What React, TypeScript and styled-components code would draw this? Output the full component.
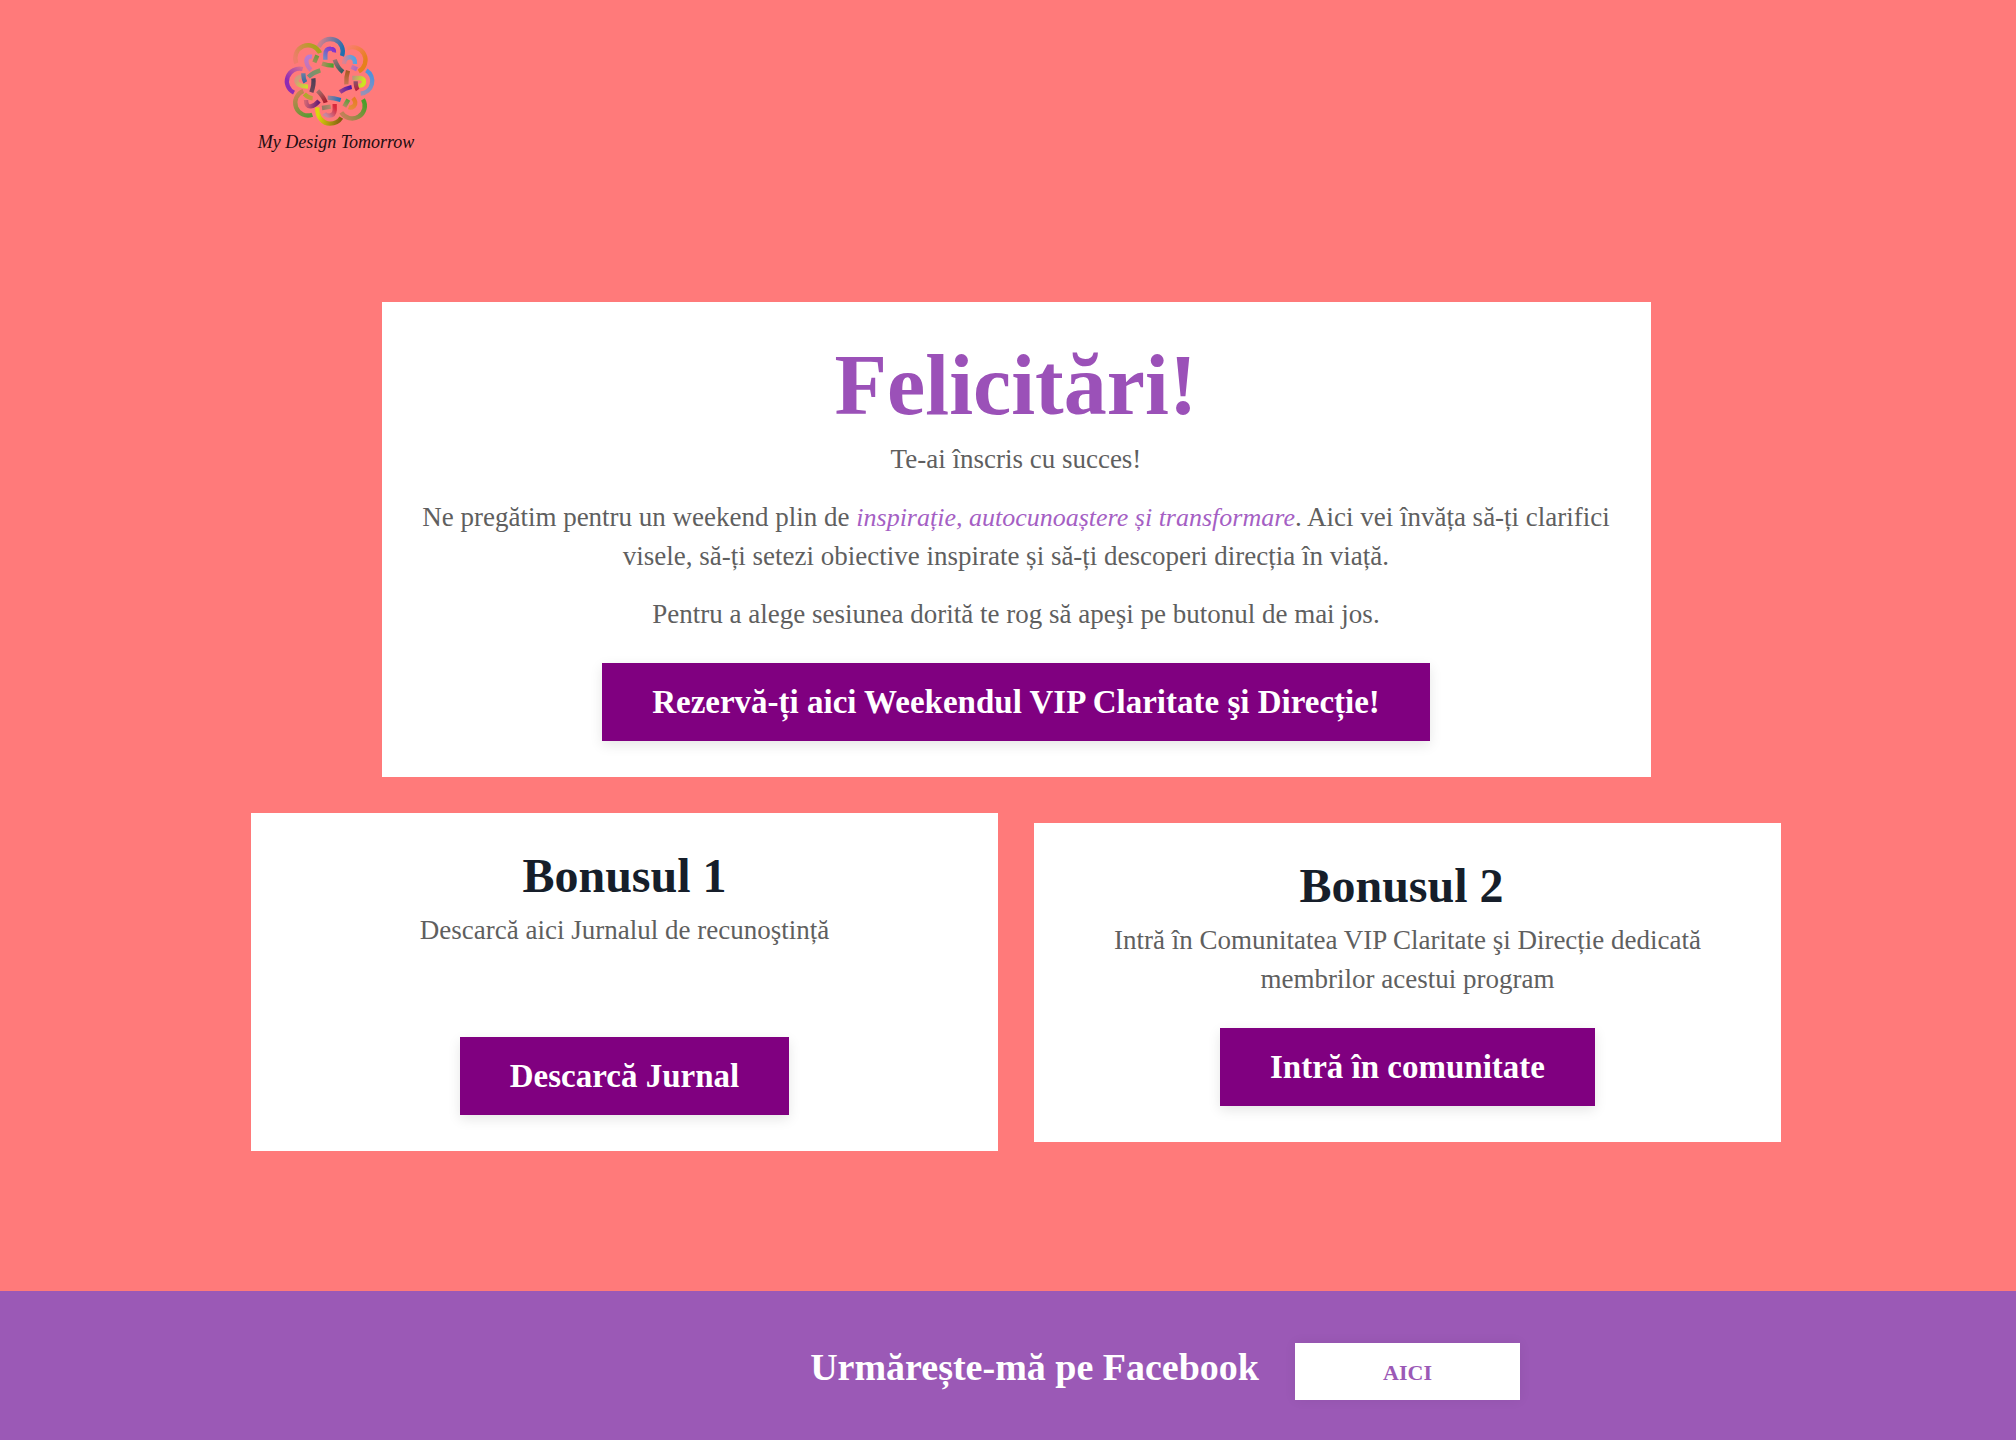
import React from "react";
import styled, { createGlobalStyle } from "styled-components";

const GlobalStyle = createGlobalStyle`
  *, *::before, *::after { box-sizing: border-box; }
  body {
    margin: 0;
    background: #ff7a7a;
    color: #5f5f5f;
    font-family: "Liberation Serif", "Times New Roman", serif;
    font-size: 27px;
    line-height: 39px;
  }
`;

const Container = styled.div`
  max-width: 1530px;
  margin: 0 auto;
`;

const Grid = styled.div`
  display: grid;
  grid-template-columns: repeat(12, minmax(0, 1fr));
  gap: 36px;
`;

const Header = styled.header`
  padding: 30px 0 132px 16px;
`;

const LogoLink = styled.a`
  display: block;
  width: 180px;
  height: 140px;
`;

const Main = styled.main`
  padding: 0 0 140px 16px;
`;

const Cards = styled(Grid)`
  align-items: center;
`;

const Card = styled.section<{ $column: string }>`
  grid-column: ${(p) => p.$column};
  padding: 36px;
  background: #fff;
  text-align: center;
`;

const Title = styled.h1`
  margin: 0 0 8px;
  color: #9b51b8;
  font-size: 86px;
  line-height: 94px;
`;

const Subtitle = styled.h2`
  margin: 0 0 8px;
  color: #161e2a;
  font-size: 48px;
  line-height: 54px;
`;

const Text = styled.p`
  margin: 0 0 19px;
`;

const Accent = styled.em`
  color: #a55fc4;
  font-size: 26px;
`;

const Action = styled.div<{ $roomy?: boolean }>`
  padding-top: ${(p) => (p.$roomy ? 68 : 10)}px;
`;

const Button = styled.a`
  display: inline-block;
  padding: 20px 50px 19px;
  background: #800080;
  box-shadow: 0 4px 12px rgba(0, 0, 0, 0.1);
  color: #fff;
  font-size: 33px;
  font-weight: 700;
  text-decoration: none;
  vertical-align: top;
`;

const Footer = styled.footer`
  padding: 52px 0 40px 16px;
  background: #9b59b6;
`;

const FooterGrid = styled(Grid)`
  align-items: baseline;
`;

const FooterTitle = styled.h2`
  grid-column: 1 / 9;
  margin: 0;
  color: #fff;
  font-size: 38px;
  line-height: 48px;
  text-align: right;
`;

const FooterButton = styled.a`
  grid-column: 9 / 11;
  padding: 10px 9px 8px;
  background: #fff;
  box-shadow: 0 0 12px rgba(0, 0, 0, 0.06);
  color: #9b59b6;
  font-size: 22px;
  font-weight: 700;
  text-align: center;
  text-decoration: none;
`;

const Wordmark = styled.text`
  fill: #1c0c10;
  font-size: 54px;
  font-style: italic;
`;

type Stroke = {
  d: string;
  colors: [string, string];
  line: [number, number, number, number];
};

const strokes: Stroke[] = [
  // Outer loops
  { d: "M236 81A37 37 0 0 1 306 108", colors: ["#d0808c", "#1f6fb0"], line: [236, 78, 306, 100] },
  { d: "M320 86A37 37 0 0 1 356 154", colors: ["#fb7e70", "#e6801c"], line: [318, 86, 366, 130] },
  { d: "M379 151A38 38 0 0 1 362 221", colors: ["#4f92dc", "#9c91b4"], line: [390, 160, 362, 221] },
  { d: "M369 238A37 37 0 0 1 304 277", colors: ["#4a9f2a", "#c28058"], line: [369, 240, 308, 284] },
  { d: "M232 262C230 292 250 311 270 311C285 311 297 304 304 293", colors: ["#dcd50c", "#85600f"], line: [236, 280, 304, 294] },
  { d: "M190 213A37 37 0 0 0 217 284", colors: ["#c58550", "#549c32"], line: [175, 220, 217, 284] },
  { d: "M188 147A38 38 0 0 0 162 218", colors: ["#d06c96", "#8e2bb4"], line: [190, 147, 155, 190] },
  { d: "M169 130A37 37 0 0 1 240 99", colors: ["#f07c6c", "#a8a51a"], line: [169, 125, 235, 90] },
  // Hooks inside each loop
  { d: "M256 119V104Q256 85 272 86Q284 86 282 97", colors: ["#7187c4", "#882dcb"], line: [256, 116, 283, 88] },
  { d: "M312 132Q312 112 331 111Q346 113 345 132", colors: ["#df8291", "#55a2e2"], line: [312, 132, 345, 122] },
  { d: "M334 140L351 148", colors: ["#c777aa", "#aa68c4"], line: [334, 140, 351, 148] },
  { d: "M337 174H360Q373 176 372 187Q370 198 355 197", colors: ["#b8967e", "#cde321"], line: [337, 174, 370, 185] },
  { d: "M347 184Q347 202 353 210", colors: ["#87536b", "#b81e38"], line: [347, 184, 353, 210] },
  { d: "M339 234Q351 248 342 258Q334 265 326 262", colors: ["#e77b24", "#e68b3a"], line: [342, 234, 328, 262] },
  { d: "M325 239L313 260", colors: ["#53a236", "#b08b63"], line: [325, 239, 313, 260] },
  { d: "M284 252V270Q283 286 268 287Q257 286 253 280", colors: ["#d9283a", "#c688a0"], line: [284, 260, 256, 283] },
  { d: "M246 264L272 260", colors: ["#947663", "#b08b6b"], line: [246, 264, 272, 260] },
  { d: "M198 240Q198 260 212 259Q225 257 237 243", colors: ["#d46674", "#651c73"], line: [195, 244, 237, 248] },
  { d: "M193 222Q205 234 218 235", colors: ["#acad29", "#c59442"], line: [193, 222, 218, 235] },
  { d: "M183 170Q166 173 170 187Q176 199 204 200", colors: ["#d09c7d", "#cde124"], line: [174, 176, 204, 200] },
  { d: "M190 160Q190 178 196 187", colors: ["#697fa3", "#3b689d"], line: [190, 160, 196, 187] },
  { d: "M216 110Q201 108 199 121Q199 138 213 150", colors: ["#b77cd4", "#cc72ad"], line: [207, 108, 207, 150] },
  { d: "M232 106L223 127", colors: ["#6b9c38", "#9b8f5a"], line: [232, 106, 223, 127] },
  // Inner ring
  { d: "M246 131Q263 137 281 137", colors: ["#b58b61", "#3fa62a"], line: [246, 131, 281, 137] },
  { d: "M284 119Q292 143 309 156", colors: ["#9c7273", "#305b62"], line: [284, 119, 309, 156] },
  { d: "M324 152Q318 170 319 193", colors: ["#a55922", "#c87452"], line: [324, 152, 319, 193] },
  { d: "M300 216Q315 205 335 201", colors: ["#9f3f8d", "#4817a8"], line: [300, 216, 335, 201] },
  { d: "M263 233Q282 234 302 240", colors: ["#a18091", "#1e70bd"], line: [263, 233, 302, 240] },
  { d: "M233 212Q251 230 257 248", colors: ["#a1746c", "#a8182b"], line: [233, 212, 257, 248] },
  { d: "M220 175Q223 192 214 217", colors: ["#493c55", "#704757"], line: [220, 175, 214, 217] },
  { d: "M205 171Q220 157 241 151", colors: ["#788b7d", "#84965a"], line: [205, 171, 241, 151] },
];

function Logo() {
  return (
    <svg width="180" height="140" viewBox="33 30 540 420" role="img" aria-label="My Design Tomorrow">
      <defs>
        {strokes.map(({ colors, line }, i) => (
          <linearGradient
            key={i}
            id={`strand-${i}`}
            gradientUnits="userSpaceOnUse"
            x1={line[0]}
            y1={line[1]}
            x2={line[2]}
            y2={line[3]}
          >
            <stop offset="0" stopColor={colors[0]} />
            <stop offset="1" stopColor={colors[1]} />
          </linearGradient>
        ))}
      </defs>
      <g fill="none" strokeWidth="13">
        {strokes.map(({ d }, i) => (
          <path key={i} d={d} stroke={`url(#strand-${i})`} />
        ))}
      </g>
      <Wordmark x="288" y="385" textAnchor="middle">
        My Design Tomorrow
      </Wordmark>
    </svg>
  );
}

export default function App() {
  return (
    <>
      <GlobalStyle />
      <Header>
        <Container>
          <LogoLink href="#">
            <Logo />
          </LogoLink>
        </Container>
      </Header>
      <Main>
        <Container>
          <Cards>
            <Card $column="2 / 12">
              <Title>Felicitări!</Title>
              <Text>Te-ai înscris cu succes!</Text>
              <Text>
                Ne pregătim pentru un weekend plin de{" "}
                <Accent>inspirație, autocunoaștere și transformare</Accent>. Aici vei învăța să-ți
                clarifici visele, să-ți setezi obiective inspirate și să-ți descoperi direcția în
                viață.&nbsp;&nbsp;&nbsp;
              </Text>
              <Text>Pentru a alege sesiunea dorită te rog să apeşi pe butonul de mai jos.</Text>
              <Action>
                <Button href="#rezerva">Rezervă-ți aici Weekendul VIP Claritate şi Direcție!</Button>
              </Action>
            </Card>
            <Card $column="1 / 7">
              <Subtitle>Bonusul 1</Subtitle>
              <Text>Descarcă aici Jurnalul de recunoştință</Text>
              <Action $roomy>
                <Button href="#jurnal">Descarcă Jurnal</Button>
              </Action>
            </Card>
            <Card $column="7 / 13">
              <Subtitle>Bonusul 2&nbsp;</Subtitle>
              <Text>
                Intră în Comunitatea VIP Claritate şi Direcție dedicată membrilor acestui program
              </Text>
              <Action>
                <Button href="#comunitate">Intră în comunitate</Button>
              </Action>
            </Card>
          </Cards>
        </Container>
      </Main>
      <Footer>
        <Container>
          <FooterGrid>
            <FooterTitle>Urmărește-mă pe Facebook</FooterTitle>
            <FooterButton href="#facebook">AICI</FooterButton>
          </FooterGrid>
        </Container>
      </Footer>
    </>
  );
}
